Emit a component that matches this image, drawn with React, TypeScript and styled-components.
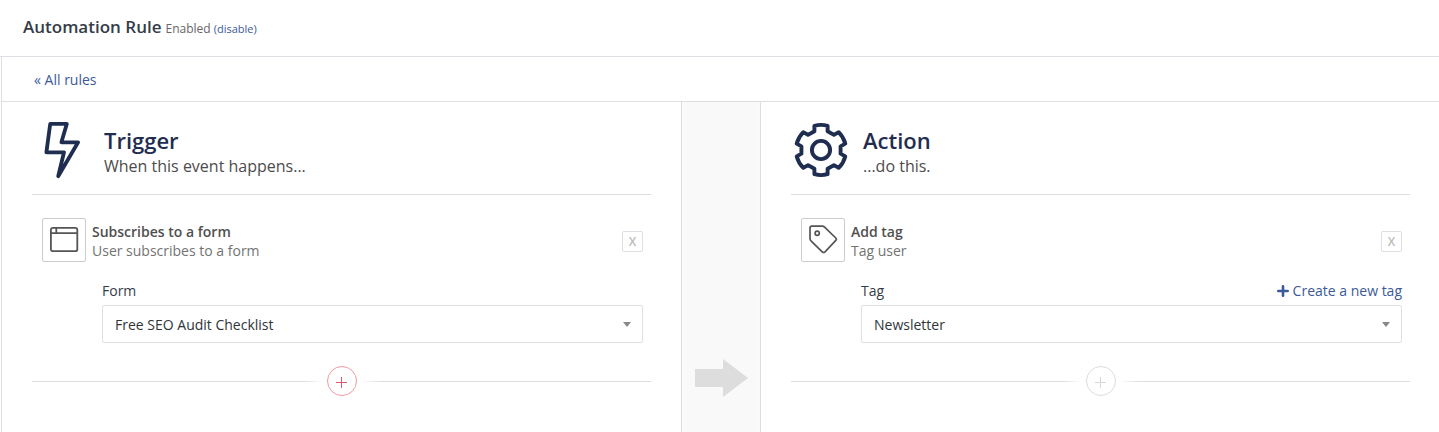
import React from "react";
import styled, { createGlobalStyle } from "styled-components";

const GlobalStyle = createGlobalStyle`
  *, *::before, *::after { box-sizing: border-box; }
  body {
    margin: 0;
    background: #fff;
    color: #353c48;
    font-family: "Open Sans", "Noto Sans", sans-serif;
    font-size: 14px;
    line-height: 20px;
  }
  h1, h2, h3, p { margin: 0; }
  button, select { font: inherit; }
`;

const Page = styled.div`
  display: flex;
  flex-direction: column;
  min-height: 100vh;
  overflow: hidden;
`;

const Header = styled.header`
  display: flex;
  align-items: baseline;
  gap: 4px;
  height: 57px;
  padding: 15px 23px 0;
  border-bottom: 1px solid #dcdfe4;
`;

const PageTitle = styled.h1`
  font-size: 17px;
  line-height: 24px;
  font-weight: 600;
`;

const Status = styled.span`
  font-size: 12px;
  color: #666;
`;

const Link = styled.a`
  color: #3c5a99;
  text-decoration: none;
`;

const StatusLink = styled(Link)`
  font-size: 11px;
`;

const Main = styled.main`
  flex: 1;
  display: flex;
  flex-direction: column;
  margin: 0 -1px 0 1px;
  border-left: 1px solid #dcdfe4;
`;

const Breadcrumb = styled.nav`
  height: 45px;
  padding: 13px 32px 0;
  border-bottom: 1px solid #dddfe2;
`;

const Columns = styled.div`
  flex: 1;
  display: grid;
  grid-template-columns: 1fr 80px 1fr;
`;

const Panel = styled.section`
  padding: 20px 30px 36px;
`;

const Divider = styled.div`
  display: flex;
  justify-content: center;
  padding-top: 257px;
  border: solid #ddd;
  border-width: 0 1px;
  background: linear-gradient(to right, #fbfbfb, #f9f9f9 6px, #f9f9f9 calc(100% - 6px), #fbfbfb);
`;

const PanelHead = styled.div`
  display: flex;
  gap: 12px;
  height: 73px;
  border-bottom: 1px solid #ddd;
`;

const PanelText = styled.div`
  padding-top: 5px;
`;

const PanelTitle = styled.h2`
  font-size: 22px;
  line-height: 26px;
  font-weight: 600;
  color: #1f2d50;
`;

const PanelSubtitle = styled.p`
  font-size: 16px;
  line-height: 26px;
  color: #4c4c4c;
`;

const Rule = styled.div`
  padding: 23px 8px 0 10px;
`;

const RuleHead = styled.div`
  display: flex;
  align-items: center;
  gap: 6px;
`;

const IconBox = styled.div`
  display: flex;
  align-items: center;
  justify-content: center;
  width: 44px;
  height: 44px;
  border: 1px solid #ccc;
  border-radius: 2px;
`;

const RuleText = styled.div`
  flex: 1;
  line-height: 19px;
  padding-top: 2px;
  color: #737373;
`;

const RuleName = styled.h3`
  font-size: 14px;
  line-height: 19px;
  font-weight: 600;
  color: #505050;
`;

const RemoveButton = styled.button`
  width: 21px;
  height: 21px;
  margin-top: 3px;
  padding: 0;
  border: 1px solid #dcdfe4;
  border-radius: 2px;
  background: #fff;
  color: #bbb;
  font-size: 12px;
  line-height: 18px;
  font-weight: 600;
  cursor: pointer;
`;

const Field = styled.div`
  padding: 19px 0 0 60px;
`;

const FieldTop = styled.div`
  display: flex;
  justify-content: space-between;
  height: 24px;
`;

const CreateLink = styled(Link)`
  display: flex;
  align-items: center;
  gap: 4px;
  height: 20px;
`;

const SelectWrap = styled.div`
  position: relative;
`;

const Select = styled.select`
  display: block;
  appearance: none;
  width: 100%;
  height: 38px;
  padding: 2px 32px 0 12px;
  border: 1px solid #dcdfe4;
  border-radius: 2px;
  background: #fff;
  color: #2f3439;
`;

const Caret = styled.svg`
  position: absolute;
  right: 12px;
  top: 17px;
  pointer-events: none;
`;

const AddRow = styled.div`
  display: flex;
  align-items: center;
  gap: 4px;
  margin-top: 23px;

  &::before,
  &::after {
    content: "";
    flex: 1;
    height: 1px;
    background: linear-gradient(to right, #ddd calc(100% - 20px), #fff);
  }
  &::after {
    background: linear-gradient(to left, #ddd calc(100% - 20px), #fff);
  }
`;

const AddButton = styled.button<{ $muted?: boolean }>`
  display: flex;
  align-items: center;
  justify-content: center;
  width: 30px;
  height: 30px;
  padding: 2px 0 0;
  border: 1px solid ${(p) => (p.$muted ? "#ddd" : "#f09aa2")};
  border-radius: 50%;
  background: #fff;
  color: ${(p) => (p.$muted ? "#d8d8d8" : "#e0566a")};
  cursor: pointer;
`;

const BoltIcon = () => (
  <svg width="60" height="60" viewBox="-8 0 60 60" fill="none" stroke="#1f2d50" strokeWidth="3.8" strokeLinejoin="round">
    <path d="M10.2 1.9H26.8L21.4 20.3H38.1L18.2 54.2L24 30.3H6.4Z" />
  </svg>
);

// One gear tooth, turned six times round the centre to build the outline.
const tooth: [number, number][] = [[-6.6, -18.8], [-6.6, -24.2], [6.6, -24.2], [6.6, -18.8]];
const turn = ([x, y]: [number, number], deg: number) => {
  const a = (deg * Math.PI) / 180;
  return `${(x * Math.cos(a) - y * Math.sin(a)).toFixed(2)} ${(x * Math.sin(a) + y * Math.cos(a)).toFixed(2)}`;
};
const gearPath =
  [0, 60, 120, 180, 240, 300]
    .map((deg, i) => {
      const [a, b, c, d] = tooth.map((p) => turn(p, deg));
      return `${i ? "L" : "M"}${a}L${b}Q${turn([0, -26], deg)} ${c}L${d}`;
    })
    .join("") + "Z";

const GearIcon = () => (
  <svg width="60" height="60" viewBox="-30 -28 60 60" fill="none" stroke="#1f2d50" strokeWidth="3.9" strokeLinejoin="round">
    <path d={gearPath} />
    <circle r="9.1" />
  </svg>
);

const WindowIcon = () => (
  <svg width="30" height="30" viewBox="0 0 30 30" fill="none" stroke="#555" strokeWidth="1.8">
    <rect x="1.9" y="2.8" width="26.4" height="23.4" rx="2" />
    <path d="M2 8.2H28M7.3 3V8" />
  </svg>
);

const TagIcon = () => (
  <svg width="30" height="30" viewBox="0 0 30 30" fill="none" stroke="#555" strokeWidth="1.7" strokeLinejoin="round">
    <path d="M3.7 1.2H14.4Q15.6 1.2 16.6 2.2L27.8 13Q29 14.2 27.8 15.4L17 26.8Q15.6 28.2 14.2 26.8L3 15.8Q2 14.8 2 13.5V2.9Q2 1.2 3.7 1.2Z" />
    <circle cx="9.2" cy="8.3" r="2.1" />
  </svg>
);

interface PanelProps {
  id: string;
  title: string;
  subtitle: string;
  icon: React.ReactNode;
  ruleIcon: React.ReactNode;
  ruleName: string;
  ruleText: string;
  label: string;
  value: string;
  create?: string;
  muted?: boolean;
}

const RulePanel = (p: PanelProps) => (
  <Panel>
    <PanelHead>
      {p.icon}
      <PanelText>
        <PanelTitle>{p.title}</PanelTitle>
        <PanelSubtitle>{p.subtitle}</PanelSubtitle>
      </PanelText>
    </PanelHead>
    <Rule>
      <RuleHead>
        <IconBox>{p.ruleIcon}</IconBox>
        <RuleText>
          <RuleName>{p.ruleName}</RuleName>
          <p>{p.ruleText}</p>
        </RuleText>
        <RemoveButton type="button">X</RemoveButton>
      </RuleHead>
      <Field>
        <FieldTop>
          <label htmlFor={p.id}>{p.label}</label>
          {p.create && (
            <CreateLink href="#create">
              <svg width="12" height="12" viewBox="0 0 12 12" fill="none" stroke="currentColor" strokeWidth="2.6" strokeLinecap="round">
                <path d="M6 1.3V10.7M1.3 6H10.7" />
              </svg>
              {p.create}
            </CreateLink>
          )}
        </FieldTop>
        <SelectWrap>
          <Select id={p.id} defaultValue={p.value}>
            <option>{p.value}</option>
          </Select>
          <Caret width="8" height="5" viewBox="0 0 8 5">
            <path d="M0 0H8L4 5Z" fill="#888" />
          </Caret>
        </SelectWrap>
      </Field>
    </Rule>
    <AddRow>
      <AddButton type="button" $muted={p.muted} aria-label="Add">
        <svg width="12" height="12" viewBox="0 0 12 12" fill="none" stroke="currentColor">
          <path d="M5.5 1V12M0 6.5H11" />
        </svg>
      </AddButton>
    </AddRow>
  </Panel>
);

export default function App() {
  return (
    <Page>
      <GlobalStyle />
      <Header>
        <PageTitle>Automation Rule</PageTitle>
        <Status>
          Enabled <StatusLink href="#disable">(disable)</StatusLink>
        </Status>
      </Header>
      <Main>
        <Breadcrumb>
          <Link href="#rules">« All rules</Link>
        </Breadcrumb>
        <Columns>
          <RulePanel
            id="form"
            title="Trigger"
            subtitle="When this event happens..."
            icon={<BoltIcon />}
            ruleIcon={<WindowIcon />}
            ruleName="Subscribes to a form"
            ruleText="User subscribes to a form"
            label="Form"
            value="Free SEO Audit Checklist"
          />
          <Divider>
            <svg width="53" height="38" viewBox="0 0 53 38">
              <path d="M0 10H28V0L53 19L28 38V28H0Z" fill="#ddd" />
            </svg>
          </Divider>
          <RulePanel
            id="tag"
            title="Action"
            subtitle="...do this."
            icon={<GearIcon />}
            ruleIcon={<TagIcon />}
            ruleName="Add tag"
            ruleText="Tag user"
            label="Tag"
            value="Newsletter"
            create="Create a new tag"
            muted
          />
        </Columns>
      </Main>
    </Page>
  );
}
